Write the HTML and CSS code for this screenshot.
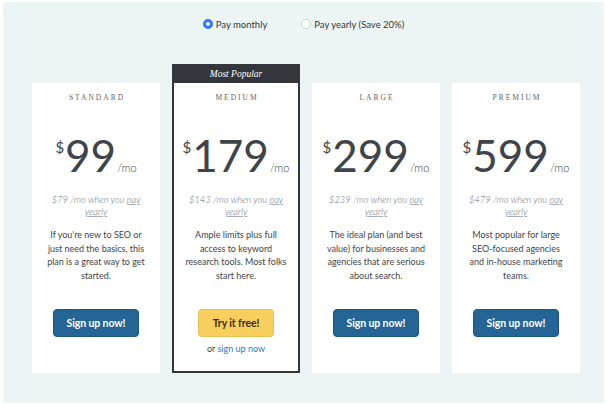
FILE: index.html
```html
<!DOCTYPE html>
<html lang="en">
<head>
<meta charset="utf-8">
<title>Pricing</title>
<link rel="stylesheet" href="styles.css">
</head>
<body>
<div class="page">
  <div class="billing">
    <label class="opt"><span class="radio radio-on"></span>Pay monthly</label>
    <label class="opt"><span class="radio"></span>Pay yearly (Save 20%)</label>
  </div>
  <div class="plans">
    <div class="plan">
      <div class="plan-body">
        <div class="plan-name">Standard</div>
        <div class="price"><span class="cur">$</span><span class="amt">99</span><span class="per">/mo</span></div>
        <p class="annual">$79 /mo when you <span class="link">pay</span> <span class="link">yearly</span></p>
        <p class="desc">If you're new to SEO or just need the basics, this plan is a great way to get started.</p>
        <a class="btn btn-blue" href="#">Sign up now!</a>
      </div>
    </div>
    <div class="plan plan-popular">
      <div class="badge">Most Popular</div>
      <div class="plan-body">
        <div class="plan-name">Medium</div>
        <div class="price"><span class="cur">$</span><span class="amt">179</span><span class="per">/mo</span></div>
        <p class="annual">$143 /mo when you <span class="link">pay</span> <span class="link">yearly</span></p>
        <p class="desc">Ample limits plus full access to keyword research tools. Most folks start here.</p>
        <a class="btn btn-yellow" href="#">Try it free!</a>
        <p class="alt">or <a href="#">sign up now</a></p>
      </div>
    </div>
    <div class="plan">
      <div class="plan-body">
        <div class="plan-name">Large</div>
        <div class="price"><span class="cur">$</span><span class="amt">299</span><span class="per">/mo</span></div>
        <p class="annual">$239 /mo when you <span class="link">pay</span> <span class="link">yearly</span></p>
        <p class="desc">The ideal plan (and best value) for businesses and agencies that are serious about search.</p>
        <a class="btn btn-blue" href="#">Sign up now!</a>
      </div>
    </div>
    <div class="plan">
      <div class="plan-body">
        <div class="plan-name">Premium</div>
        <div class="price"><span class="cur">$</span><span class="amt">599</span><span class="per">/mo</span></div>
        <p class="annual">$479 /mo when you <span class="link">pay</span> <span class="link">yearly</span></p>
        <p class="desc">Most popular for large SEO-focused agencies and in-house marketing teams.</p>
        <a class="btn btn-blue" href="#">Sign up now!</a>
      </div>
    </div>
  </div>
</div>
</body>
</html>
```

FILE: styles.css
```css
* { box-sizing: border-box; }

html, body {
  margin: 0;
  padding: 0;
  background: #ffffff;
}

body {
  font-family: Lato, "Open Sans", Arial, sans-serif;
  color: #3e4448;
}

.page {
  margin: 2px 3px 0 3px;
  height: 401px;
  background: #edf5f4;
  display: flex;
  flex-direction: column;
}

.billing {
  margin-top: 12px;
  height: 20px;
  display: flex;
  justify-content: center;
  align-items: center;
  gap: 34px;
  font-size: 9.5px;
  color: #33383c;
}

.opt {
  display: flex;
  align-items: center;
  gap: 3px;
}

.radio {
  width: 10px;
  height: 10px;
  border-radius: 50%;
  background: #fff;
  border: 1px solid #cfd3d5;
}

.radio-on {
  background: #fff;
  border: 3px solid #2f7bf5;
}

.plans {
  margin-top: 30px;
  padding-left: 29px;
  display: flex;
  gap: 12px;
  align-items: stretch;
}

.plan {
  width: 128px;
  margin-top: 19px;
  background: #ffffff;
  display: flex;
  flex-direction: column;
}

.plan-popular {
  margin-top: 0;
  border: 2px solid #33373c;
}

.badge {
  height: 17px;
  background: #33373c;
  color: #ffffff;
  font-family: "Liberation Serif", "DejaVu Serif", serif;
  font-style: italic;
  font-size: 9.5px;
  line-height: 17px;
  text-align: center;
}

.plan-body {
  padding: 9px 0 15px;
  display: flex;
  flex-direction: column;
  align-items: center;
  text-align: center;
}

.plan-name {
  font-family: "Liberation Serif", "DejaVu Serif", serif;
  font-size: 7.5px;
  line-height: 12px;
  letter-spacing: 2px;
  text-transform: uppercase;
  color: #5f6467;
  margin-right: -2px;
}

.price {
  margin-top: 29px;
  height: 50px;
  line-height: 50px;
  white-space: nowrap;
  color: #3e4448;
}

.cur {
  font-size: 15px;
  line-height: 1;
  vertical-align: 19px;
  margin-right: 1px;
}

.amt {
  font-size: 44px;
  line-height: 1;
}

.per {
  font-size: 11px;
  line-height: 1;
  margin-left: 1px;
  font-weight: 300;
}

.annual {
  margin: 11px 0 0;
  width: 100px;
  font-size: 9.3px;
  line-height: 12px;
  font-style: italic;
  font-weight: 300;
  color: #6c7175;
}

.link {
  text-decoration: underline;
  text-decoration-color: #a9adb0;
}

.desc {
  margin: 10px 0 0;
  width: 102px;
  font-size: 9px;
  line-height: 13.5px;
  color: #3f4448;
}

.btn {
  margin-top: 27px;
  height: 28px;
  border-radius: 4px;
  display: flex;
  align-items: center;
  justify-content: center;
  font-weight: 700;
  font-size: 10.5px;
  letter-spacing: -0.1px;
  text-decoration: none;
}

.btn-blue {
  width: 86px;
  background: #246596;
  border: 1px solid #1c5684;
  color: #ffffff;
}

.btn-yellow {
  width: 76px;
  background: #f8cf5e;
  border: 1px solid #ecc04c;
  color: #3b2b12;
}

.alt {
  margin: 5px 0 0;
  font-size: 9px;
  line-height: 14px;
  color: #41464a;
}

.alt a {
  color: #2a7bbd;
  text-decoration: none;
}
```
